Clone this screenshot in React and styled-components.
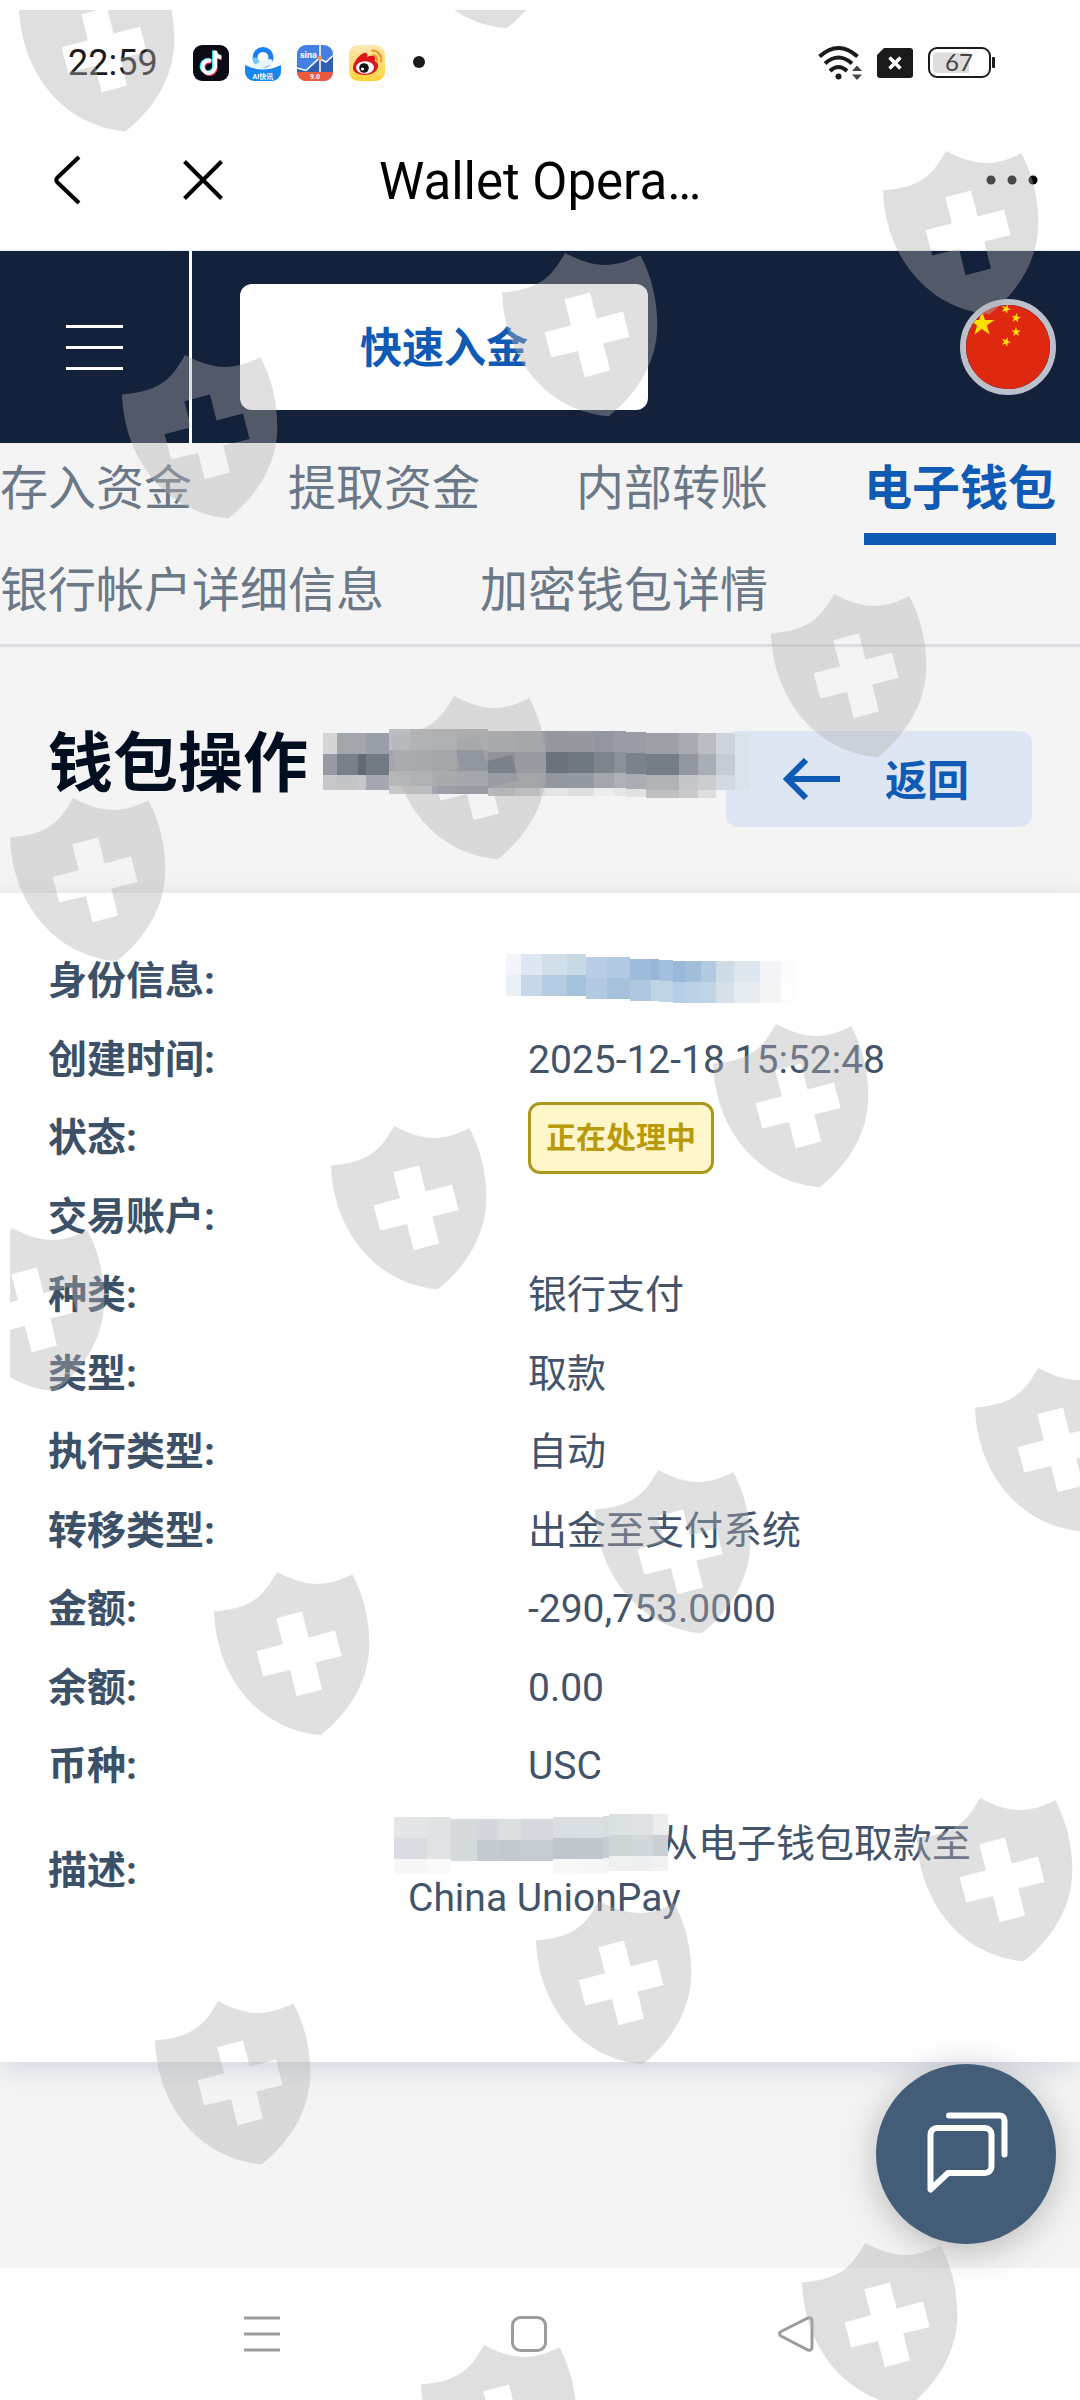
import React from "react";
import styled, { createGlobalStyle } from "styled-components";

const GlobalStyle = createGlobalStyle`
  * {
    box-sizing: border-box;
  }
  body {
    margin: 0;
    background: #ffffff;
    font-family: Roboto, "Noto Sans CJK SC", sans-serif;
  }
  button {
    padding: 0;
    border: none;
    background: none;
    font-family: inherit;
    cursor: pointer;
  }
  svg {
    display: block;
  }
`;

const tabs = [
  { name: "存入资金" },
  { name: "提取资金" },
  { name: "内部转账" },
  { name: "电子钱包", active: true },
  { name: "银行帐户详细信息" },
  { name: "加密钱包详情" },
];

// each column: x, width, y, colours from top to bottom
const titleMosaic = [
  [0, 14, 4, ["#d4d5d7", "#969aa2", "#c6c7ca"]],
  [14, 21, 4, ["#a0a6aa", "#787f88", "#c3c4c6"]],
  [35, 8, 4, ["#a3a6ae", "#636a74", "#c6c7ca"]],
  [43, 23, 4, ["#9a9ea8", "#727a84", "#a5a8b0"]],
  [66, 21, 0, ["#bcbfc2", "#a3a7aa", "#b6b8ba", "#c6c7c9"]],
  [87, 22, 0, ["#b2b4b6", "#a4a6a8", "#b1b3b5", "#c4c5c6"]],
  [109, 25, 0, ["#adb0b3", "#9c9fa5", "#a8abae", "#9a9ea8"]],
  [134, 31, 0, ["#a7aaad", "#92969e", "#a4a7ab", "#989ca5"]],
  [165, 27, 2, ["#a3a6a9", "#7b818a", "#989ca3", "#b6b8ba"]],
  [192, 25, 2, ["#9da1a5", "#888c93", "#999da3", "#c4c5c6"]],
  [217, 6, 2, ["#9b9ea3", "#888c93", "#969aa1", "#dedfe0"]],
  [223, 22, 2, ["#9497a0", "#6b727d", "#92969e", "#e4e4e5"]],
  [245, 26, 2, ["#96999f", "#6f7780", "#9599a1", "#dfdfe0"]],
  [271, 20, 2, ["#9296a0", "#7d848c", "#a3a6ad", "#ededee"]],
  [291, 12, 2, ["#999ca4", "#8b9198", "#adb0b6", "#e6e6e7"]],
  [303, 20, 3, ["#9a9da6", "#7a838b", "#aaaeb4", "#e1e1e2"]],
  [323, 33, 4, ["#9da0a6", "#757d87", "#b0b2b6", "#bfc0c1"]],
  [356, 19, 4, ["#a8abaf", "#9296a0", "#c5c6c8", "#c9cacb"]],
  [375, 18, 4, ["#b9bcc1", "#a9adb5", "#caccd0", "#dededf"]],
  [393, 19, 4, ["#cfd3dc", "#c5ccd5", "#d4d8e0"]],
  [412, 15, 4, ["#dae2ec", "#dae2ec", "#dae2ec"]],
];

const idMosaic = [
  [0, 15, 0, ["#f2f6fa", "#eaf0f8"]],
  [15, 21, 0, ["#dfe8f2", "#c5d7e9"]],
  [36, 25, 0, ["#d1dfea", "#b4cbe1"]],
  [61, 19, 0, ["#c8dae8", "#a5c2dc"]],
  [80, 21, 3, ["#b9cee5", "#b3c9e1"]],
  [101, 23, 3, ["#b4cae3", "#a5c1dc"]],
  [124, 21, 5, ["#9ebbdc", "#b0c7e0"]],
  [145, 8, 5, ["#98b7d8", "#c0d4e6"]],
  [153, 14, 6, ["#a3c0dc", "#bfd4e5"]],
  [167, 12, 7, ["#98b9da", "#b6cfe7"]],
  [179, 16, 7, ["#a1bfdb", "#bad1e7"]],
  [195, 15, 7, ["#b2c9df", "#c1d4e5"]],
  [210, 18, 7, ["#cedce8", "#d5e0e8"]],
  [228, 26, 7, ["#dee6ee", "#e5ebee"]],
  [254, 21, 7, ["#f2f4f8", "#f3f4f6"]],
  [275, 14, 7, ["#fcfcfd", "#fdfdfd"]],
];

const memoMosaic = [
  [0, 11, 3, ["#e5e6e8", "#dadde1", "#f7f7f7"]],
  [11, 22, 3, ["#e3e5e7", "#d9dce0", "#f7f7f7"]],
  [33, 24, 3, ["#dfe3e4", "#e0e4e5", "#fafafa"]],
  [57, 26, 5, ["#d5dadd", "#d5dadd"]],
  [83, 22, 5, ["#d4d8dc", "#c6cbd0"]],
  [105, 22, 5, ["#dadfe1", "#c3c9cf"]],
  [127, 32, 5, ["#d5d9de", "#c6cdd1"]],
  [159, 28, 3, ["#d8dee1", "#c0c6cc", "#f8f8f8"]],
  [187, 22, 3, ["#dadfe3", "#c1c8cd", "#f7f7f8"]],
  [209, 6, 2, ["#d8dddf", "#c6cdd0", "#f4f4f5"]],
  [215, 23, 0, ["#dbe0e2", "#ced5d7", "#eff0f0"]],
  [238, 21, 0, ["#dfe3e5", "#d3d8dc", "#eeeff0"]],
  [259, 15, 0, ["#ecedef", "#cbd0d5", "#f1f2f3"]],
];

const shields = [
  [19, -32],
  [400, -135],
  [883, 151],
  [122, 355],
  [502, 253],
  [771, 594],
  [391, 696],
  [10, 798],
  [713, 1024],
  [331, 1126],
  [-51, 1228],
  [975, 1368],
  [595, 1470],
  [214, 1572],
  [917, 1798],
  [536, 1901],
  [155, 2001],
  [802, 2243],
  [421, 2345],
];

const bandTop = [0, 21, 42, 57];
const bandHeight = [21, 21, 15, 8];

const Mosaic = ({ columns, width, height }) => (
  <svg width={width} height={height} shapeRendering="crispEdges" aria-hidden="true">
    {columns.map(([x, w, y, colors]) =>
      colors.map((color, i) => (
        <rect
          key={`${x}-${i}`}
          x={x}
          y={y + bandTop[i]}
          width={w}
          height={bandHeight[i]}
          fill={color}
        />
      ))
    )}
  </svg>
);

const Shields = () => (
  <ShieldLayer viewBox="0 0 1080 2400" preserveAspectRatio="xMidYMin slice" aria-hidden="true">
    <defs>
      <clipPath id="edge">
        <rect x="10" y="10" width="1070" height="2390" />
      </clipPath>
      <path
        id="shield"
        fillRule="evenodd"
        d="M0 39.6C36 36 48 27 63 0C93 16 113 15 138.3 2.3C149 22 155.3 46 155.3 72C155.3 108 136 140 106.7 163.3C44 158 2 104 0 39.6Z
          M62.3 46.3L88 39.6L94.6 65.6L121 58.6L127.6 84L101.3 90.6L108 117.6L82.6 124.3L76 98L49.3 104.6L42.6 79.3L69 72.3Z"
      />
    </defs>
    <g clipPath="url(#edge)" fill="#b2b2b2" fillOpacity="0.4">
      {shields.map(([x, y]) => (
        <use key={`${x},${y}`} href="#shield" x={x} y={y} />
      ))}
    </g>
  </ShieldLayer>
);

const starPoints = (cx, cy, r, turn = 0) =>
  Array.from({ length: 10 }, (_, i) => {
    const a = ((i * 36 - 90 + turn) * Math.PI) / 180;
    const d = i % 2 ? r * 0.39 : r;
    return `${cx + d * Math.cos(a)},${cy + d * Math.sin(a)}`;
  }).join(" ");

const Flag = () => (
  <svg width="84" height="84" viewBox="0 0 84 84" aria-hidden="true">
    <rect width="84" height="84" fill="#de2910" />
    <g fill="#ffde00">
      <polygon points={starPoints(16, 19, 13)} />
      <polygon points={starPoints(40, 4, 5, 22)} />
      <polygon points={starPoints(50, 13, 5, 10)} />
      <polygon points={starPoints(50, 27, 5)} />
      <polygon points={starPoints(40, 37, 5, 22)} />
    </g>
  </svg>
);

const AppIcons = () => (
  <>
    <svg width="36" height="36" viewBox="0 0 36 36" aria-hidden="true">
      <rect width="36" height="36" rx="9" fill="#0b0b16" />
      <g fill="none" strokeWidth="4">
        <path stroke="#25f4ee" d="M17 15.500a6.200 6.200 0 1 0 4 6V5.500c.6 4 3 6 6.500 6.300" />
        <path stroke="#fe2c55" d="M18.800 17a6.200 6.200 0 1 0 4 6V7c.6 4 3 6 6.200 6.300" />
        <path stroke="#ffffff" d="M18 16a6.200 6.200 0 1 0 4 6V6c.6 4 3 6 6.200 6.300" />
      </g>
    </svg>
    <svg width="36" height="36" viewBox="0 0 36 36" aria-hidden="true">
      <path d="M0 20Q18 29 36 20V27a9 9 0 0 1-9 9H9a9 9 0 0 1-9-9Z" fill="#1787ee" />
      <circle cx="18" cy="12.500" r="8" fill="none" stroke="#1780f2" strokeWidth="5" />
      <path d="M20 20.500a8 8 0 0 1-10-8" fill="none" stroke="#6ec8ff" strokeWidth="5" />
      <path d="M5 22Q16 26 29 18L26 14Q16 15 8 21Z" fill="#eaf6ff" />
      <text x="18" y="34" textAnchor="middle" fontSize="7" fontWeight="700" fill="#ffffff">AI快讯</text>
    </svg>
    <svg width="36" height="36" viewBox="0 0 36 36" aria-hidden="true">
      <rect width="36" height="36" rx="9" fill="#4480e2" />
      <path d="M0 24L9 26L22 14L29 17L36 10V27H0Z" fill="#2f5fae" />
      <path d="M0 23L9 25.500L22 13.500L29 17L36 10.500M23 0V27" fill="none" stroke="#ffffff" strokeWidth="1.500" />
      <path d="M0 27H36a9 9 0 0 1-9 9H9a9 9 0 0 1-9-9Z" fill="#ec5a3c" />
      <circle cx="23" cy="13" r="2.200" fill="#e29a3c" />
      <text x="3" y="13" fontSize="9" fontWeight="700" fill="#ffffff">sina</text>
      <text x="18" y="34" textAnchor="middle" fontSize="7" fontWeight="700" fill="#ffffff">9.0</text>
    </svg>
    <svg width="36" height="36" viewBox="0 0 36 36" aria-hidden="true">
      <defs>
        <linearGradient id="amber" x1="0" y1="0" x2="0" y2="1">
          <stop offset="0" stopColor="#fbe9b4" />
          <stop offset="1" stopColor="#ffd33a" />
        </linearGradient>
      </defs>
      <rect width="36" height="36" rx="9" fill="url(#amber)" />
      <path
        d="M4 23C4 17 10 10 15 8c3-1 4 1 3 4c3-1.500 7-2 8 0c.6 1.500 0 2.500-.5 4c3 1 4 3 3.500 6c-1 5-7 8-13 8C9 30 4 27 4 23Z"
        fill="#e0141d"
      />
      <ellipse cx="16" cy="22.500" rx="9" ry="6.300" fill="#ffffff" />
      <circle cx="15" cy="23" r="4.800" fill="#111111" />
      <circle cx="13.500" cy="24" r="1.600" fill="#ffffff" />
      <path d="M23 5.500a9 9 0 0 1 9 11M24 10a5 5 0 0 1 4 5.500" fill="none" stroke="#f3961d" strokeWidth="2.200" strokeLinecap="round" />
    </svg>
    <svg width="36" height="36" viewBox="0 0 36 36" aria-hidden="true">
      <circle cx="18" cy="17" r="6" fill="#1a1a1a" />
    </svg>
  </>
);

const StatusIcons = () => (
  <>
    <svg width="44" height="36" viewBox="0 0 44 36" aria-hidden="true">
      <g fill="none" stroke="#1a1a1a" strokeWidth="4">
        <path d="M1.500 11.500Q20.500-5.500 39.500 11.500" />
        <path d="M7 18.500Q20.500 6.500 34 18.500" />
        <path d="M12 26Q20.500 18 29 26" />
      </g>
      <circle cx="20.500" cy="31.500" r="3" fill="#1a1a1a" />
      <path d="M34 26L39 20.500L44 26ZM34 29.500L39 35L44 29.500Z" fill="#444444" />
    </svg>
    <svg width="36" height="30" viewBox="0 0 36 30" aria-hidden="true">
      <path d="M7 0H33a3 3 0 0 1 3 3V27a3 3 0 0 1-3 3H3a3 3 0 0 1-3-3V7Z" fill="#1a1a1a" />
      <path d="M12.500 9.500L23.500 20.500M23.500 9.500L12.500 20.500" stroke="#ffffff" strokeWidth="3.500" />
    </svg>
    <svg width="68" height="32" viewBox="0 0 68 32" aria-hidden="true">
      <rect x="1" y="1" width="61" height="29" rx="8" fill="none" stroke="#1a1a1a" strokeWidth="2" />
      <path d="M9 5.500H41V26H9a4 4 0 0 1-4-4V9.500a4 4 0 0 1 4-4Z" fill="#dedede" />
      <rect x="64" y="10" width="3" height="11" rx="1" fill="#1a1a1a" />
      <text x="31" y="24" textAnchor="middle" fontFamily="Lato, sans-serif" fontSize="24" fill="#444444">67</text>
    </svg>
  </>
);

const Detail = ({ label, children, wide }) => (
  <DetailRow $wide={wide}>
    <Label $wide={wide}>{label}:</Label>
    <Value>{children}</Value>
  </DetailRow>
);

const App = () => {
  return (
    <Page>
      <GlobalStyle />
      <StatusBar>
        <Time>22:59</Time>
        <IconGroup $gap={16}>
          <AppIcons />
        </IconGroup>
        <Spacer />
        <IconGroup $gap={15}>
          <StatusIcons />
        </IconGroup>
      </StatusBar>

      <TitleBar>
        <IconButton aria-label="Back">
          <svg width="28" height="50" viewBox="0 0 28 50" fill="none" stroke="#000000" strokeWidth="4">
            <path d="M26 2L4.500 22.500Q2 25 4.500 27.500L26 48" />
          </svg>
        </IconButton>
        <IconButton aria-label="Close">
          <svg width="40" height="40" viewBox="0 0 40 40" fill="none" stroke="#000000" strokeWidth="4">
            <path d="M1.500 1.500L38.500 38.500M38.500 1.500L1.500 38.500" />
          </svg>
        </IconButton>
        <PageName>Wallet Opera…</PageName>
        <IconButton aria-label="More">
          <svg width="52" height="10" viewBox="0 0 52 10" fill="#000000">
            <circle cx="5" cy="5" r="4.500" />
            <circle cx="26" cy="5" r="4.500" />
            <circle cx="47" cy="5" r="4.500" />
          </svg>
        </IconButton>
      </TitleBar>

      <Header>
        <MenuButton aria-label="Menu">
          <svg width="57" height="45" viewBox="0 0 57 45" fill="#ffffff">
            <rect width="57" height="3" />
            <rect y="21" width="57" height="3" />
            <rect y="42" width="57" height="3" />
          </svg>
        </MenuButton>
        <DepositButton>快速入金</DepositButton>
        <Spacer />
        <FlagButton aria-label="中文">
          <Flag />
        </FlagButton>
      </Header>

      <Tabs>
        {tabs.map((tab) => (
          <Tab key={tab.name} href="#" $active={tab.active}>
            {tab.name}
          </Tab>
        ))}
      </Tabs>

      <Heading>
        <Title>钱包操作</Title>
        <TitleMask>
          <Mosaic columns={titleMosaic} width={427} height={72} />
        </TitleMask>
        <BackButton>
          <svg width="57" height="42" viewBox="0 0 57 42" fill="none" stroke="#0f5ab5" strokeWidth="6">
            <path d="M57 21H5M23 2L4 21L23 40" />
          </svg>
          <BackLabel>返回</BackLabel>
        </BackButton>
      </Heading>

      <Card>
        <Detail label="身份信息">
          <IdMask>
            <Mosaic columns={idMosaic} width={289} height={54} />
          </IdMask>
        </Detail>
        <Detail label="创建时间">2025-12-18 15:52:48</Detail>
        <Detail label="状态">
          <Badge>正在处理中</Badge>
        </Detail>
        <Detail label="交易账户" />
        <Detail label="种类">银行支付</Detail>
        <Detail label="类型">取款</Detail>
        <Detail label="执行类型">自动</Detail>
        <Detail label="转移类型">出金至支付系统</Detail>
        <Detail label="金额">-290,753.0000</Detail>
        <Detail label="余额">0.00</Detail>
        <Detail label="币种">USC</Detail>
        <Detail label="描述" wide>
          <MemoLine>
            <MemoMask>
              <Mosaic columns={memoMosaic} width={274} height={60} />
            </MemoMask>
            从电子钱包取款至
          </MemoLine>
          China UnionPay
        </Detail>
      </Card>

      <Footer />

      <NavBar>
        <IconButton aria-label="Recent">
          <svg width="36" height="36" viewBox="0 0 36 36" stroke="#9c9c9c" strokeWidth="3">
            <path d="M0 2H36M0 18H36M0 34H36" />
          </svg>
        </IconButton>
        <IconButton aria-label="Home">
          <svg width="36" height="36" viewBox="0 0 36 36" fill="none" stroke="#9c9c9c" strokeWidth="3">
            <rect x="1.500" y="1.500" width="33" height="33" rx="8" />
          </svg>
        </IconButton>
        <IconButton aria-label="Back">
          <svg width="36" height="36" viewBox="0 0 36 36" fill="none" stroke="#9c9c9c" strokeWidth="3">
            <path d="M3 15.500L30 2Q34 1 34 5V31Q34 35 30 34L3 20Q0 18 3 15.500Z" />
          </svg>
        </IconButton>
      </NavBar>

      <ChatButton aria-label="Chat">
        <svg width="84" height="84" viewBox="0 0 84 84" fill="none" stroke="#ffffff" strokeWidth="6" strokeLinecap="round" strokeLinejoin="round">
          <path d="M6.500 77.500V22.500a6.500 6.500 0 0 1 6.500-6.500H61a6.500 6.500 0 0 1 6.500 6.500V54.500a6.500 6.500 0 0 1-6.500 6.500H24Z" />
          <path d="M25 3.500H75.500a5 5 0 0 1 5 5V42.500" />
        </svg>
      </ChatButton>

      <Shields />
    </Page>
  );
};

const Page = styled.div`
  position: relative;
  display: flex;
  flex-direction: column;
  min-height: 100vh;
  overflow: hidden;
  background: #fefefe;
`;

const ShieldLayer = styled.svg`
  position: absolute;
  inset: 0;
  z-index: 2;
  width: 100%;
  height: 100%;
  pointer-events: none;
`;

const Spacer = styled.div`
  flex: 1;
`;

const StatusBar = styled.div`
  display: flex;
  align-items: center;
  height: 110px;
  padding: 16px 84px 0 68px;
`;

const Time = styled.span`
  width: 125px;
  font-size: 36px;
  line-height: 36px;
  color: #1a1a1a;
`;

const IconGroup = styled.div`
  display: flex;
  align-items: center;
  gap: ${(props) => props.$gap}px;
`;

const TitleBar = styled.div`
  display: flex;
  align-items: center;
  height: 141px;
  padding: 0 42px 0 53px;
  border-bottom: 1px solid #e3eaef;
`;

const IconButton = styled.button`
  display: flex;
  align-items: center;
  justify-content: center;

  & + & {
    margin-left: 102px;
  }
`;

const PageName = styled.div`
  flex: 1;
  padding: 4px 0 0 156px;
  font-size: 51px;
  line-height: 60px;
  color: #000000;
`;

const Header = styled.header`
  display: flex;
  align-items: center;
  height: 192px;
  padding-right: 24px;
  background: #13213b;
`;

const MenuButton = styled.button`
  display: flex;
  align-items: center;
  justify-content: center;
  align-self: stretch;
  width: 192px;
  border-right: 3px solid #ffffff;
`;

const DepositButton = styled.button`
  width: 408px;
  height: 126px;
  margin-left: 48px;
  padding-top: 4px;
  border-radius: 12px;
  background: #ffffff;
  font-size: 42px;
  font-weight: 700;
  line-height: 60px;
  color: #0f5ab5;
`;

const FlagButton = styled.button`
  width: 96px;
  height: 96px;
  border: 6px solid #bcc0ca;
  border-radius: 50%;
  overflow: hidden;
`;

const Tabs = styled.nav`
  display: flex;
  flex-wrap: wrap;
  column-gap: 96px;
  background: #f4f4f4;
  box-shadow: inset 0 -3px #dcdde3;
`;

const Tab = styled.a`
  height: 102px;
  border-bottom: 12px solid ${(props) => (props.$active ? "#0f5ab5" : "transparent")};
  font-size: 48px;
  font-weight: ${(props) => (props.$active ? 700 : 400)};
  line-height: 92px;
  color: ${(props) => (props.$active ? "#0f5ab5" : "#6b7887")};
  text-decoration: none;
`;

const Heading = styled.div`
  display: flex;
  align-items: flex-start;
  height: 246px;
  padding: 82px 48px 0;
  background: #f4f4f4;
`;

const Title = styled.h1`
  margin: 0;
  width: 275px;
  font-size: 65px;
  font-weight: 700;
  line-height: 70px;
  color: #010e20;
  white-space: nowrap;
`;

/* the masked number runs over the edge of the button */
const TitleMask = styled.div`
  z-index: 1;
  margin-right: -24px;
`;

const BackButton = styled.button`
  display: flex;
  align-items: center;
  gap: 45px;
  flex: none;
  width: 306px;
  height: 96px;
  margin: 2px 0 0 auto;
  padding: 0 57px;
  border-radius: 12px;
  background: #dde6f2;
  font-size: 42px;
  font-weight: 700;
  line-height: 60px;
  color: #0f5ab5;
`;

const BackLabel = styled.span`
  padding-top: 5px;
`;

const Card = styled.dl`
  display: grid;
  grid-auto-rows: minmax(78px, auto) minmax(79px, auto);
  z-index: 0;
  margin: 0;
  padding: 49px 48px 125px;
  background: #ffffff;
  box-shadow: 0 6px 24px rgba(60, 100, 150, 0.2);
`;

const DetailRow = styled.div`
  display: flex;
  align-items: center;
  padding: ${(props) => (props.$wide ? 12 : 0)}px 0;
  font-size: 39px;
  line-height: 54px;
`;

const Label = styled.dt`
  flex: none;
  width: ${(props) => (props.$wide ? 360 : 480)}px;
  font-weight: 700;
  color: #3c5168;
`;

const Value = styled.dd`
  flex: 1;
  margin: 0;
  color: #43536a;
`;

const IdMask = styled.div`
  margin-left: -22px;
`;

const Badge = styled.span`
  display: block;
  width: max-content;
  padding: 0 15px;
  border: 3px solid #ab981e;
  border-radius: 12px;
  background: #fff6c9;
  font-size: 30px;
  font-weight: 700;
  line-height: 66px;
  color: #b89a0c;
`;

const MemoLine = styled.div`
  display: flex;
  align-items: center;
  height: 54px;
`;

const MemoMask = styled.div`
  z-index: 1;
  margin: 0 -9px 0 -14px;
`;

const Footer = styled.div`
  flex: 1;
  min-height: 200px;
  background: #f4f4f4;
`;

const NavBar = styled.div`
  display: grid;
  grid-template-columns: repeat(3, 1fr);
  align-items: center;
  height: 132px;
  padding: 0 150px 0 128px;
  z-index: 0;
  background: #fefefe;

  ${IconButton} {
    margin: 0;
  }
`;

const ChatButton = styled.button`
  position: absolute;
  right: 24px;
  bottom: 156px;
  display: flex;
  align-items: center;
  justify-content: center;
  width: 180px;
  height: 180px;
  border-radius: 50%;
  background: #435d79;
  box-shadow: 0 6px 36px rgba(0, 0, 0, 0.25);
`;

export default App;
